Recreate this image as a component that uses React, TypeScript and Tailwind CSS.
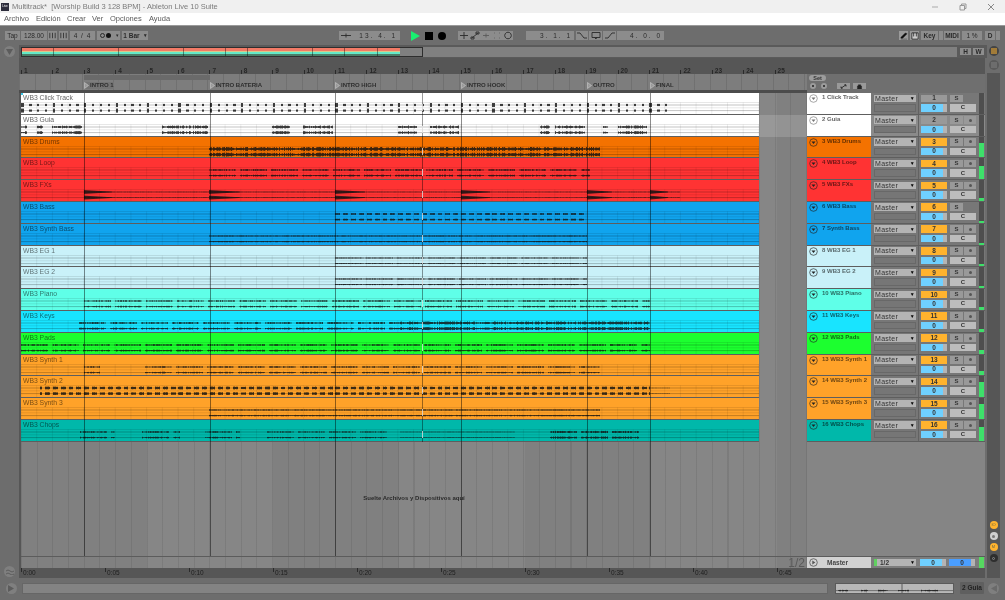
import React from 'react';

const BAR = 31.4;
const barX = (n: number) => 2 + (n - 1) * BAR; // x inside the arrangement column, which starts at 19
const LOCATORS = [84, 209.5, 335, 461, 587, 650];
const OVERVIEW_MARKS = [31, 96, 161, 203, 225, 290, 322, 355];

type Seg = [number, number, 'tick' | 'burst' | 'line' | 'dash' | 'hit', number?];

interface Track {
  clip: string;
  name: string;
  bg: string;
  segs: Seg[];
  dot?: boolean;
  level: number;
}

const track = (clip: string, name: string, bg: string, segs: Seg[], level: number, dot = true): Track => ({ clip, name, bg, segs, level, dot });

const ORANGE = 'bg-[#ffa229]';
const RED = 'bg-[#ff3333]';
const BLUE = 'bg-[#10a4ee]';
const PALE = 'bg-[#c9f1f9]';

const TRACKS: Track[] = [
  track('WB3 Click Track', '1 Click Track', 'bg-white', [[21, 673, 'tick']], 0, false),
  track('WB3 Guia', '2 Guia', 'bg-white', [[21, 27, 'burst'], [37, 43, 'burst'], [52, 82, 'burst'], [162, 208, 'burst'], [272, 290, 'burst'], [303, 333, 'burst'], [398, 417, 'burst'], [430, 459, 'burst'], [540, 550, 'burst'], [555, 585, 'burst'], [603, 608, 'burst'], [618, 647, 'burst']], 0),
  track('WB3 Drums', '3 WB3 Drums', 'bg-[#f47200]', [[209, 600, 'burst', 1.3]], 0.7),
  track('WB3 Loop', '4 WB3 Loop', RED, [[209, 590, 'burst', 0.6]], 0.65),
  track('WB3 FXs', '5 WB3 FXs', RED, [[84, 680, 'line', 0.5], [84, 112, 'hit'], [209, 240, 'hit'], [335, 365, 'hit'], [461, 490, 'hit'], [587, 612, 'hit'], [650, 668, 'hit']], 0.15),
  track('WB3 Bass', '6 WB3 Bass', BLUE, [[335, 587, 'dash', 0.75]], 0.1, false),
  track('WB3 Synth Bass', '7 Synth Bass', BLUE, [[209, 587, 'line', 1]], 0.1),
  track('WB3 EG 1', '8 WB3 EG 1', PALE, [[335, 587, 'burst', 0.3], [335, 587, 'line', 0.6]], 0.1),
  track('WB3 EG 2', '9 WB3 EG 2', PALE, [[335, 587, 'burst', 0.35], [335, 587, 'line', 0.7]], 0.1),
  track('WB3 Piano', '10 WB3 Piano', 'bg-[#5fffe8]', [[84, 650, 'burst', 0.55]], 0.15),
  track('WB3 Keys', '11 WB3 Keys', 'bg-[#18e4ff]', [[79, 400, 'burst', 0.65], [400, 650, 'burst', 1]], 0.15),
  track('WB3 Pads', '12 WB3 Pads', 'bg-[#1cff2f]', [[21, 650, 'burst', 0.6]], 0.15),
  track('WB3 Synth 1', '13 WB3 Synth 1', ORANGE, [[84, 100, 'burst', 0.55], [145, 600, 'burst', 0.55]], 0.2),
  track('WB3 Synth 2', '14 WB3 Synth 2', ORANGE, [[40, 650, 'dash', 1.2], [650, 670, 'line', 0.4]], 0.75),
  track('WB3 Synth 3', '15 WB3 Synth 3', ORANGE, [[209, 600, 'line', 1.1]], 0.7),
  track('WB3 Chops', '16 WB3 Chops', 'bg-[#00b8aa]', [[80, 115, 'burst', 0.55], [142, 180, 'burst', 0.55], [205, 240, 'burst', 0.55], [267, 390, 'burst', 0.45], [400, 515, 'line', 0.5], [550, 642, 'burst', 0.75]], 0.65),
];

function rng(seed: number) {
  let s = seed;
  return () => {
    s = (s * 16807) % 2147483647;
    return s / 2147483647;
  };
}

// waveform path for one clip, x runs from 0 at the left end of the clip
function wavePath(segs: Seg[], seed: number) {
  const r = rng(seed * 7919 + 13);
  let d = '';
  const put = (x: number, amp: number) => {
    for (const y of [12, 17.6]) d += `M${x} ${y - amp}V${y + amp}`;
  };
  for (const [a, b, kind, gain = 1] of segs) {
    for (let i = a; i < b; i++) {
      const x = i - 21;
      const beat = ((i - 21) % (BAR / 4)) / (BAR / 4);
      if (kind === 'tick') {
        if (beat < 0.28) put(x + 0.5, (i - 21) % BAR < 3 ? 2 : 1.1);
      } else if (kind === 'burst') {
        const phrase = ((i - a) % 31) / 31;
        const gate = gain > 0.9 ? 1 : phrase < 0.86 ? 1 : 0;
        put(x + 0.5, gate * (0.45 + r() * 1.1) * gain);
      } else if (kind === 'line') {
        put(x + 0.5, (0.35 + r() * 0.3) * gain);
      } else if (kind === 'dash') {
        if (beat < 0.62) put(x + 0.5, 1.1 * gain * (0.8 + r() * 0.3));
      } else {
        put(x + 0.5, 1.6 * (1 - (i - a) / (b - a)) + 0.3);
      }
    }
  }
  return d;
}

function Key({ h = 'h-[9px]', className = '', children }: { h?: string; className?: string; children?: React.ReactNode }) {
  return <div className={`flex shrink-0 items-center justify-center bg-[#8c8c8c] text-[6.5px] text-[#2a2a2a] ${h} ${className}`}>{children}</div>;
}

function Dark({ d, className = '' }: { d: string; className?: string }) {
  return (
    <svg viewBox="0 0 10 9" className={`h-[9px] w-[10px] ${className}`} fill="none" stroke="#2a2a2a" strokeWidth="0.9">
      <path d={d} />
    </svg>
  );
}

function RoundIcon({ size = 'h-[11px] w-[11px]', className = '', children }: { size?: string; className?: string; children?: React.ReactNode }) {
  return <div className={`flex items-center justify-center rounded-full ${size} ${className}`}>{children}</div>;
}

function TitleBar() {
  return (
    <div className="flex h-[13px] items-center bg-[#f0f0f0] pl-[1px]">
      <div className="flex h-[8px] w-[8px] items-center justify-center bg-[#2d2d3c] text-[3px] text-white">Live</div>
      <span className="ml-[3px] text-[7.5px] text-[#7b7b7b]">Multitrack*&nbsp; [Worship Build 3 128 BPM] - Ableton Live 10 Suite</span>
      <div className="ml-auto flex items-center gap-[20px] pr-[10px]">
        <svg viewBox="0 0 8 8" className="h-[8px] w-[8px]" stroke="#aaa" fill="none"><path d="M1 4h6" /></svg>
        <svg viewBox="0 0 8 8" className="h-[8px] w-[8px]" stroke="#999" fill="none"><path d="M1 2.5h4.5V7H1zM2.5 2.5V1H7v4.5H5.5" /></svg>
        <svg viewBox="0 0 8 8" className="h-[8px] w-[8px]" stroke="#888" fill="none"><path d="M1 1l6 6M7 1L1 7" /></svg>
      </div>
    </div>
  );
}

function MenuBar() {
  return (
    <div className="flex h-[12px] items-center bg-white pl-[4px] text-[7.5px] text-[#5a5a5a]">
      <span className="w-[32px]">Archivo</span>
      <span className="w-[31px]">Edición</span>
      <span className="w-[25px]">Crear</span>
      <span className="w-[18px]">Ver</span>
      <span className="w-[39px]">Opciones</span>
      <span>Ayuda</span>
    </div>
  );
}

function ControlBar() {
  return (
    <div className="flex h-[20px] items-center border-t border-[#9a9a9a] bg-[#6d6d6d] pl-[5px]">
      <Key className="w-[15px]">Tap</Key>
      <Key className="ml-[1px] w-[26px]">128.00</Key>
      <Key className="ml-[1px] w-[9px]"><Dark d="M2 1.5v6M5 1.5v6M8 1.5v6" /></Key>
      <Key className="ml-[2px] w-[9px]"><Dark d="M2 1.5v6M5 1.5v6M8 1.5v6" /></Key>
      <Key className="ml-[2px] w-[25px] tracking-[1px]">4 / 4</Key>
      <Key className="ml-[2px] w-[23px] justify-start pl-[3px]">
        <span className="mr-[1px] h-[5px] w-[5px] rounded-full border border-[#2a2a2a]" />
        <span className="h-[5px] w-[5px] rounded-full bg-[#111]" />
        <span className="ml-[5px] text-[5px]">▾</span>
      </Key>
      <Key className="ml-[2px] w-[26px] gap-[4px] font-bold"><span>1 Bar</span><span className="text-[5px]">▾</span></Key>

      <Key className="ml-[191px] w-[13px]"><Dark d="M0 4.5h10M5 2.5v4" /></Key>
      <Key className="w-[48px] justify-end pr-[3px] tracking-[2px]">13. 4. 1</Key>
      <svg viewBox="0 0 9 10" className="ml-[11px] h-[10px] w-[9px] shrink-0"><path d="M0 0l9 5-9 5z" fill="#18f070" /></svg>
      <div className="ml-[5px] h-[8px] w-[8px] bg-black" />
      <div className="ml-[5px] h-[8px] w-[8px] rounded-full bg-black" />
      <Key className="ml-[12px] w-[11px]"><Dark d="M1 4.5h8M5 1v7" /></Key>
      <Key className="w-[11px]"><Dark d="M2 7l6-5M1 6h3v2H1zM6 1h3v2H6z" /></Key>
      <Key className="w-[11px]"><Dark d="M2 4.5h6M5 2.5v4" className="opacity-50" /></Key>
      <Key className="w-[11px]"><Dark d="M2 2h1M7 2h1M2 7h1M7 7h1" className="opacity-40" /></Key>
      <Key className="w-[11px]"><Dark d="M5 1.2a3.3 3.3 0 1 0 .01 0z" /></Key>
      <Key className="ml-[13px] w-[48px] justify-end pr-[2px] tracking-[2px]">3. 1. 1</Key>
      <Key className="ml-[2px] w-[12px]"><Dark d="M0 2h3l4 5h3" /></Key>
      <Key className="ml-[1px] w-[13px]"><Dark d="M1 1.5h8v5H1zM5 8l-1.5-1.5M5 8l1-2" /></Key>
      <Key className="ml-[1px] w-[13px]"><Dark d="M0 7h3l4-5h3" /></Key>
      <Key className="ml-[1px] w-[47px] justify-end pr-[2px] tracking-[2px]">4. 0. 0</Key>

      <Key className="ml-[235px] w-[9px] bg-[#9a9a9a]"><svg viewBox="0 0 9 9" className="h-[8px] w-[8px]"><path d="M1 6l5-5 2 1-5 5H1zM1 8h7" fill="#111" stroke="#111" strokeWidth="0.4" /></svg></Key>
      <Key className="ml-[2px] w-[9px] bg-[#9a9a9a]"><svg viewBox="0 0 9 9" className="h-[8px] w-[8px]"><path d="M1 1h7v7H1zM3 1v4M6 1v4" stroke="#111" fill="#ccc" strokeWidth="0.8" /></svg></Key>
      <Key className="ml-[2px] w-[17px] font-bold">Key</Key>
      <Key className="ml-[1px] w-[4px]" />
      <Key className="ml-[1px] w-[16px] font-bold">MIDI</Key>
      <Key className="ml-[2px] w-[20px]">1 %</Key>
      <Key className="ml-[3px] w-[10px] font-bold">D</Key>
      <Key className="ml-[1px] w-[4px]" />
    </div>
  );
}

function Overview() {
  return (
    <div className="flex h-[13px] items-center bg-[#5a5a5a] pl-[2px]">
      <div className="flex h-[10px] w-[936px] bg-[#808080]">
        <div className="relative flex w-[402px] flex-col border border-[#2e2e2e] bg-[#808080]">
          <div className="w-[378px] grow-0">
            <div className="h-[3px] bg-[#f27a66]" />
            <div className="h-[1px] bg-[#d9c98a]" />
            <div className="h-[2px] bg-[#63e9c8]" />
            <div className="h-[2px] bg-[#4a7f68]" />
          </div>
          {OVERVIEW_MARKS.map(x => (
            <span key={x} className="absolute inset-y-0 w-[1px] bg-black/40" style={{ left: x }} />
          ))}
        </div>
      </div>
      <Key h="h-[7px]" className="ml-[3px] w-[11px] bg-[#8e8e8e] font-bold">H</Key>
      <Key h="h-[7px]" className="ml-[2px] w-[11px] bg-[#8e8e8e] font-bold">W</Key>
    </div>
  );
}

function Ruler() {
  return (
    <div className="relative h-[16px] bg-[#565656] text-[6.5px] font-bold text-[#262626]">
      {Array.from({ length: 25 }, (_, i) => (
        <div key={i} className="absolute bottom-0 flex h-[6px] items-end" style={{ left: barX(i + 1) }}>
          <span className="h-[4px] w-[1px] bg-[#2a2a2a]" />
          <span className="ml-[2px] leading-[7px]">{i + 1}</span>
        </div>
      ))}
    </div>
  );
}

function Locators() {
  const names = ['INTRO 1', 'INTRO BATERIA', 'INTRO HIGH', 'INTRO HOOK', 'OUTRO', 'FINAL'];
  return (
    <div className="relative h-[19px] border-b-[3px] border-[#4c4c4c] bg-[#7d7d7d] bg-[repeating-linear-gradient(90deg,#0000001a_0_1px,transparent_1px_15.7px)]">
      <div className="absolute left-[65px] top-[1px] h-[5px] w-[126px] bg-[#6a6a6a]" />
      <div className="absolute left-[65px] top-[8px] h-[7px] w-[30px] bg-[#747474]" />
      {LOCATORS.map((x, i) => (
        <div key={x} className="absolute top-[8px] flex h-[7px] items-center pr-[2px] text-[6px] font-bold text-[#2e2e2e]" style={{ left: x - 19 }}>
          <svg viewBox="0 0 5 7" className="h-[7px] w-[5px]"><path d="M.5.5l4 3-4 3z" fill="#9a9a9a" stroke="#d8d8d8" strokeWidth="0.5" /></svg>
          <span className="ml-[1px]">{names[i]}</span>
        </div>
      ))}
    </div>
  );
}

function ClipRow({ t, index }: { t: Track; index: number }) {
  const path = wavePath(t.segs, index + 1);
  const textTone = index < 2 ? 'text-[#666666]' : 'text-black/55';
  return (
    <div className={`flex h-[21.8px] ${index === 1 ? 'bg-white/15' : ''}`}>
      <div className={`relative h-full w-[738px] border-b border-[#5e5e5e] ${t.bg}`}>
        <span className={`absolute left-[2px] top-[1px] text-[6.8px] font-medium leading-[8px] ${textTone}`}>{t.clip}</span>
        <svg viewBox="0 0 738 21" className="absolute left-0 top-0 h-[21px] w-[738px]">
          <path d="M0 12h738M0 17.6h738" stroke="#000" strokeOpacity="0.3" strokeWidth="0.8" />
          <path d="M0 14.8h738M0 9.5h738" stroke="#000" strokeOpacity="0.12" strokeWidth="0.8" />
          <path d={Array.from({ length: 48 }, (_, i) => `M${i * 15.7} 9.5V21`).join('')} stroke="#000" strokeOpacity="0.07" />
          <path d={path} stroke="#111" strokeOpacity="0.8" strokeWidth="1" />
        </svg>
      </div>
    </div>
  );
}

function MixCell({ t, index }: { t: Track; index: number }) {
  const grey = index < 2;
  return (
    <div className={`flex h-[21.8px] border-b border-[#5e5e5e] ${index === 1 ? 'bg-[#8a8a8a]' : 'bg-[#777777]'}`}>
      <div className={`flex w-[64px] shrink-0 items-start gap-[4px] pl-[2px] pt-[1px] ${t.bg}`}>
        <svg viewBox="0 0 9 9" className="h-[9px] w-[9px] shrink-0" fill="none" stroke={grey ? '#777' : '#222'} strokeOpacity="0.8">
          <circle cx="4.5" cy="4.5" r="3.8" strokeWidth="0.8" />
          <path d="M2.5 3.5h4l-2 2.5z" fill={grey ? '#777' : '#222'} stroke="none" />
        </svg>
        <span className={`whitespace-nowrap text-[6px] font-bold leading-[7px] ${grey ? 'text-[#666]' : 'text-black/60'}`}>{t.name}</span>
      </div>
      <div className="flex w-[47px] shrink-0 flex-col gap-[2px] pl-[3px] pr-[2px] pt-[1.5px]">
        <div className="flex h-[7.5px] items-center justify-between bg-[#b4b4b4] px-[1px] text-[7px] leading-none tracking-[0.3px] text-[#333]">
          <span>Master</span><span className="text-[5px] text-black">▼</span>
        </div>
        <div className="h-[7.5px] border border-[#686868] bg-[#767676]" />
      </div>
      <div className="flex shrink-0 flex-col gap-[2px] border-l border-[#626262] pl-[2px] pt-[1.5px]">
        <div className="flex">
          <div className={`flex h-[7.5px] w-[26px] items-center justify-center text-[6.5px] font-bold text-[#333] ${grey ? 'bg-[#999999]' : 'bg-[#ffb32e]'}`}>{index + 1}</div>
          <div className="ml-[3px] flex h-[7.5px] w-[13px] items-center justify-center bg-[#999999] text-[6px] font-bold text-[#333]">S</div>
          {t.dot && (
            <div className="ml-[1px] flex h-[7.5px] w-[12px] items-center justify-center bg-[#999999]">
              <span className="h-[3px] w-[3px] rounded-full bg-[#555]" />
            </div>
          )}
        </div>
        <div className="flex">
          <div className="relative flex h-[7.5px] w-[26px] items-center justify-center bg-[#b4b4b4] text-[6.5px] font-bold text-[#333]">
            <span className="absolute inset-y-0 left-0 w-[22px] bg-[#6fd0ff]" />
            <span className="relative">0</span>
          </div>
          <div className="ml-[3px] flex h-[7.5px] w-[26px] items-center justify-center bg-[#bcbcbc] text-[6px] font-bold text-[#333]">C</div>
        </div>
      </div>
      <div className="ml-auto mr-[1px] flex h-full w-[5px] flex-col justify-end bg-[#4e4e4e]">
        <div className="w-full bg-[#3ee06a]" style={{ height: `${t.level * 100}%` }} />
      </div>
    </div>
  );
}

function Arrangement() {
  const playhead = 422 - 21;
  return (
    <div className="relative flex min-h-0 flex-1 flex-col bg-[#838383] bg-[repeating-linear-gradient(90deg,#808080_0_126px,#868686_126px_252px)]">
      <div className="absolute inset-0 bg-[repeating-linear-gradient(90deg,#00000014_0_1px,transparent_1px_15.7px)]" />
      <div className="relative">
        {TRACKS.map((t, i) => <ClipRow key={t.clip} t={t} index={i} />)}
      </div>
      <div className="relative flex flex-1 items-start justify-center pt-[52px] text-[6px] font-bold text-[#2a2a2a]">
        <span>Suelte Archivos y Dispositivos aquí</span>
      </div>
      <div className="relative flex h-[12px] items-center justify-end border-t border-[#5c5c5c] pr-[2px]">
        <span className="text-[12px] leading-none text-[#5a5a5a]">1/2</span>
      </div>
      {LOCATORS.map(x => (
        <div key={x} className="absolute bottom-[12px] top-0 w-[1px] bg-black/45" style={{ left: x - 21 }} />
      ))}
      <div className="absolute bottom-[126px] top-0 w-[1px] bg-black/40" style={{ left: playhead }} />
      {TRACKS.map((t, i) => (
        <div key={t.name} className="absolute h-[7px] w-[1px] bg-white/70" style={{ left: playhead, top: i * 21.8 + 11 }} />
      ))}
      <div className="absolute left-0 top-0 h-[2px] w-[2px] bg-[#39c6e8]" />
    </div>
  );
}

function TimeRuler() {
  return (
    <div className="relative h-[10px] bg-[#565656] text-[6.5px] text-[#202020]">
      {Array.from({ length: 10 }, (_, i) => (
        <div key={i} className="absolute top-0 flex h-[8px] items-start" style={{ left: 2 + i * 84 }}>
          <span className="h-[4px] w-[1px] bg-[#2a2a2a]" />
          <span className="ml-[1px] mt-[1px] leading-[7px]">0:{String(i * 5).padStart(2, '0')}</span>
        </div>
      ))}
    </div>
  );
}

function SidePanel() {
  return (
    <div className="flex w-[178px] shrink-0 flex-col">
      <div className="h-[16px] bg-[#565656]" />
      <div className="relative h-[19px] bg-[#6f6f6f] pl-[2px] pt-[1px]">
        <div className="flex h-[6px] w-[17px] items-center justify-center rounded-full bg-[#9c9c9c] text-[5.5px] font-bold text-[#333]">Set</div>
        <div className="mt-[2px] flex items-center">
          <span className="ml-[1px] flex h-[6px] w-[6px] items-center justify-center rounded-full bg-[#9c9c9c]"><span className="h-[2px] w-[2px] rounded-full bg-[#222]" /></span>
          <span className="ml-[5px] flex h-[6px] w-[6px] items-center justify-center rounded-full bg-[#9c9c9c]"><span className="h-[2px] w-[2px] rounded-full bg-[#222]" /></span>
          <Key h="h-[6px]" className="ml-[10px] w-[13px] bg-[#999999]"><svg viewBox="0 0 8 6" className="h-[5px] w-[7px]"><path d="M1 5l6-4M5 1h2v2M1 3v2h2" stroke="#222" fill="none" /></svg></Key>
          <Key h="h-[6px]" className="ml-[3px] w-[13px] bg-[#999999]"><svg viewBox="0 0 8 6" className="h-[5px] w-[7px]"><path d="M1.5 2.5h5V6h-5zM2.5 2.5V1h3v1.5" fill="#222" stroke="#222" strokeWidth="0.5" /></svg></Key>
        </div>
      </div>
      <div>
        {TRACKS.map((t, i) => <MixCell key={t.name} t={t} index={i} />)}
      </div>
      <div className="flex-1 bg-[#858585]" />
      <div className="flex h-[12px] items-center border-t border-[#5c5c5c] bg-[#7d7d7d]">
        <div className="flex h-full w-[64px] shrink-0 items-center bg-[#d2d2d2] pl-[2px]">
          <svg viewBox="0 0 9 9" className="h-[9px] w-[9px]" fill="none" stroke="#555"><circle cx="4.5" cy="4.5" r="3.8" strokeWidth="0.8" /><path d="M3.3 2.5l3 2-3 2z" fill="#555" stroke="none" /></svg>
          <span className="ml-[9px] text-[6.5px] font-bold text-[#444]">Master</span>
        </div>
        <div className="ml-[3px] flex h-[7.5px] w-[42px] shrink-0 items-center bg-[#b4b4b4] text-[6.5px] font-bold text-[#333]">
          <span className="h-full w-[3px] bg-[#60d060]" />
          <span className="ml-[3px]">1/2</span>
          <span className="ml-auto mr-[1px] text-[5px] text-black">▼</span>
        </div>
        <div className="relative ml-[4px] flex h-[7.5px] w-[26px] shrink-0 items-center justify-center bg-[#b4b4b4] text-[6.5px] font-bold text-[#333]">
          <span className="absolute inset-y-0 left-0 w-[22px] bg-[#6fd0ff]" /><span className="relative">0</span>
        </div>
        <div className="relative ml-[3px] flex h-[7.5px] w-[26px] shrink-0 items-center justify-center bg-[#b4b4b4] text-[6.5px] font-bold text-[#333]">
          <span className="absolute inset-y-0 left-0 w-[22px] bg-[#4a9eff]" /><span className="relative">0</span>
        </div>
        <div className="ml-auto mr-[1px] h-full w-[5px] bg-[#56d860]" />
      </div>
      <div className="h-[10px] bg-[#565656]" />
    </div>
  );
}

function RightRail() {
  return (
    <div className="flex w-[13px] shrink-0 flex-col items-center bg-[#565656]">
      <div className="flex w-full flex-col items-center bg-[#6d6d6d] pb-[3px] pt-[1px]">
        <RoundIcon size="h-[10px] w-[10px]" className="bg-[#444]">
          <svg viewBox="0 0 6 6" className="h-[6px] w-[6px]"><path d="M0 1h6M0 3h6M0 5h6" stroke="#ffb32e" /></svg>
        </RoundIcon>
        <RoundIcon size="h-[10px] w-[10px]" className="mt-[4px] bg-[#5a5a5a]">
          <svg viewBox="0 0 6 6" className="h-[6px] w-[6px]"><path d="M1 0v6M3 0v6M5 0v6" stroke="#808080" /></svg>
        </RoundIcon>
      </div>
      <div className="mt-[448px] flex flex-col gap-[3px]">
        <RoundIcon size="h-[8px] w-[8px]" className="bg-[#ffb32e] text-[4px] text-[#664]">IO</RoundIcon>
        <RoundIcon size="h-[8px] w-[8px]" className="bg-[#cfcfcf]"><span className="h-[3px] w-[3px] rounded-full bg-[#777]" /></RoundIcon>
        <RoundIcon size="h-[8px] w-[8px]" className="bg-[#ffb32e] text-[4px] text-[#664]">M</RoundIcon>
        <RoundIcon size="h-[8px] w-[8px]" className="bg-[#2e2e2e]"><span className="h-[3px] w-[3px] rounded-full border border-[#888]" /></RoundIcon>
      </div>
    </div>
  );
}

function LeftRail() {
  return (
    <div className="flex w-[19px] shrink-0 flex-col items-center justify-between pb-[1px] pt-[1px]">
      <RoundIcon className="bg-[#7f7f7f]"><svg viewBox="0 0 7 6" className="h-[6px] w-[7px]"><path d="M0 0h7L3.5 6z" fill="#5c5c5c" /></svg></RoundIcon>
      <RoundIcon className="bg-[#7f7f7f]"><svg viewBox="0 0 8 6" className="h-[6px] w-[8px]"><path d="M0 2q2-2 4 0t4 0M0 5q2-2 4 0t4 0" stroke="#5c5c5c" fill="none" /></svg></RoundIcon>
    </div>
  );
}

function BottomBar() {
  const mini = wavePath([[837, 847, 'burst'], [860, 867, 'burst'], [877, 887, 'burst'], [897, 908, 'burst'], [920, 937, 'burst']], 3);
  return (
    <div className="flex h-[22px] items-center bg-[#6d6d6d] pb-[2px]">
      <div className="flex w-[22px] shrink-0 justify-center">
        <RoundIcon className="bg-[#7f7f7f]"><svg viewBox="0 0 6 7" className="h-[7px] w-[6px]"><path d="M0 0l6 3.5L0 7z" fill="#5c5c5c" /></svg></RoundIcon>
      </div>
      <div className="h-[11px] w-[806px] shrink-0 border border-[#666] bg-[#838383]" />
      <div className="ml-[7px] h-[11px] w-[119px] shrink-0 overflow-hidden border border-[#5a5a5a] bg-[#b8b8b8]">
        <svg viewBox="814 0 119 20" className="h-[11px] w-[119px]" preserveAspectRatio="none">
          <path d="M814 12h119M814 17.6h119" stroke="#444" strokeWidth="0.8" />
          <path d="M880 0v20" stroke="#444" />
          <path d={mini} stroke="#111" strokeWidth="1" />
        </svg>
      </div>
      <div className="ml-[6px] flex h-[12px] w-[24px] shrink-0 items-center justify-center rounded-[1px] bg-[#5f5f5f] text-[6.5px] font-bold text-[#222]">2 Guia</div>
      <RoundIcon className="ml-[4px] bg-[#7f7f7f]"><svg viewBox="0 0 6 7" className="h-[7px] w-[6px]"><path d="M6 0L0 3.5 6 7z" fill="#6a6a6a" /></svg></RoundIcon>
    </div>
  );
}

export default function App() {
  return (
    <div className="flex h-[600px] w-[1005px] flex-col overflow-hidden bg-[#6d6d6d] blur-[0.35px] [font-family:'Liberation_Sans',Arial,sans-serif]">
      <TitleBar />
      <MenuBar />
      <ControlBar />
      <div className="flex h-[533px] pr-[5px]">
        <LeftRail />
        <div className="flex w-[968px] shrink-0 flex-col">
          <Overview />
          <div className="flex min-h-0 flex-1">
            <div className="flex w-[788px] shrink-0 flex-col bg-[#565656]">
              <Ruler />
              <Locators />
              <div className="flex min-h-0 flex-1 pl-[2px]">
                <Arrangement />
              </div>
              <TimeRuler />
            </div>
            <SidePanel />
          </div>
        </div>
        <RightRail />
      </div>
      <BottomBar />
    </div>
  );
}
